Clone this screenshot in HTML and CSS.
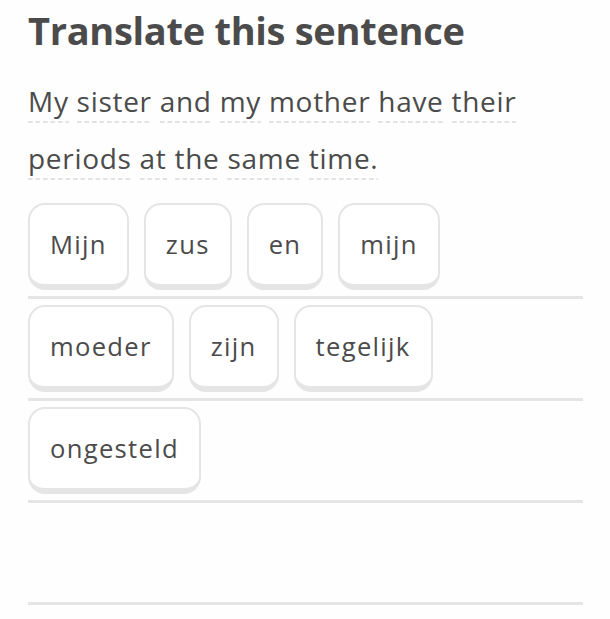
FILE: index.html
```html
<!DOCTYPE html>
<html>
<head>
<meta charset="utf-8">
<link rel="stylesheet" href="styles.css">
</head>
<body>
<main class="page">
  <h1 class="title">Translate this sentence</h1>
  <p class="prompt">
    <span class="w">My</span> <span class="w">sister</span> <span class="w">and</span> <span class="w">my</span> <span class="w">mother</span> <span class="w">have</span> <span class="w">their</span><br>
    <span class="w">periods</span> <span class="w">at</span> <span class="w">the</span> <span class="w">same</span> <span class="w">time.</span>
  </p>
  <section class="answer">
    <div class="row">
      <span class="tile">Mijn</span>
      <span class="tile">zus</span>
      <span class="tile">en</span>
      <span class="tile">mijn</span>
    </div>
    <div class="row">
      <span class="tile">moeder</span>
      <span class="tile">zijn</span>
      <span class="tile">tegelijk</span>
    </div>
    <div class="row">
      <span class="tile">ongesteld</span>
    </div>
    <div class="row"></div>
  </section>
</main>
</body>
</html>
```
FILE: styles.css
```css
html, body {
  margin: 0;
  padding: 0;
  background: #fefefe;
}
body {
  font-family: "Open Sans", "Noto Sans", sans-serif;
  color: #4b4b4b;
}
.page {
  padding: 0 27px 0 28px;
  width: 555px;
}
.title {
  margin: 0;
  padding-top: 7px;
  font-size: 38px;
  line-height: 46px;
  font-weight: 700;
  letter-spacing: -0.3px;
  color: #4b4b4b;
}
.prompt {
  margin: 0;
  padding-top: 20px;
  font-size: 28px;
  line-height: 57px;
  letter-spacing: 0.7px;
  color: #4b4b4b;
  white-space: nowrap;
}
.w {
  background-image: linear-gradient(to right, #e3e3e3 0 5px, transparent 5px 7.5px);
  background-size: 7.5px 2px;
  background-repeat: repeat-x;
  background-position: 0 39px;
  padding-bottom: 6px;
}
.answer {
  margin-top: 10px;
}
.row {
  display: flex;
  gap: 15px;
  height: 102px;
  box-sizing: border-box;
  padding-top: 6px;
  border-bottom: 3px solid #e5e5e5;
}
.tile {
  box-sizing: border-box;
  height: 87px;
  padding: 0 20px;
  display: flex;
  align-items: center;
  border: 2px solid #e5e5e5;
  border-bottom-width: 6px;
  border-radius: 17px;
  background: #fff;
  font-size: 25.6px;
  letter-spacing: 1.3px;
  color: #4b4b4b;
}
```
